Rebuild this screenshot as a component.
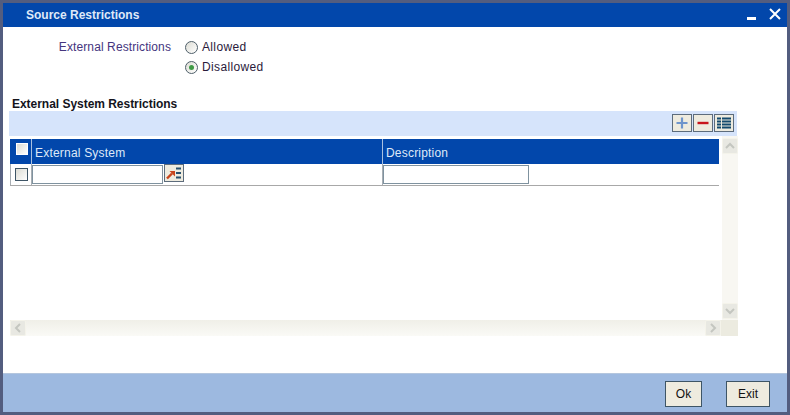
<script>
  let restriction = 'disallowed'
</script>

<div class="window">
  <header class="titlebar">
    <span class="title">Source Restrictions</span>
    <div class="wincontrols">
      <span class="min"></span>
      <svg class="close" width="12" height="12" viewBox="0 0 12 12"><path d="M1 1l10 10M11 1L1 11" stroke="#fff" stroke-width="2" fill="none"/></svg>
    </div>
  </header>

  <main class="content">
    <div class="radios">
      <span class="fieldlabel">External Restrictions</span>
      <div class="options">
        <label class="opt">
          <span class="radio" class:on={restriction === 'allowed'}></span><span class="opttext">Allowed</span>
        </label>
        <label class="opt">
          <span class="radio" class:on={restriction === 'disallowed'}></span><span class="opttext">Disallowed</span>
        </label>
      </div>
    </div>

    <h2 class="section">External System Restrictions</h2>

    <div class="gridwrap">
      <div class="toolbar">
        <button class="tool" aria-label="Add">
          <svg width="14" height="14" viewBox="0 0 14 14"><path d="M7 1.500v11M1.500 7h11" stroke="#6f95cc" stroke-width="2.200"/></svg>
        </button>
        <button class="tool" aria-label="Remove">
          <svg width="14" height="14" viewBox="0 0 14 14"><path d="M1.500 7h11" stroke="#c8141c" stroke-width="2.400"/></svg>
        </button>
        <button class="tool" aria-label="Columns">
          <svg width="14" height="13" viewBox="0 0 14 13"><path d="M0 1.500h14M0 4.500h14M0 7.500h14M0 10.500h14" stroke="#134a6e" stroke-width="2"/><path d="M4.500 0v12" stroke="#eeebdf" stroke-width="1"/></svg>
        </button>
      </div>

      <div class="gridbody">
        <div class="tablepane">
          <div class="thead">
            <div class="cellcheck"><span class="check headcheck"></span></div>
            <div class="col1 th">External System</div>
            <div class="th">Description</div>
          </div>
          <div class="trow">
            <div class="cellcheck"><span class="check"></span></div>
            <div class="col1 td">
              <span class="input wide"></span>
              <button class="lov" aria-label="List of values">
                <svg width="16" height="14" viewBox="0 0 16 14">
                  <path d="M1 12.500L6 7.500" stroke="#c8451c" stroke-width="2.400"/>
                  <path d="M3.500 5h5.500v5.500z" fill="#c8451c"/>
                  <path d="M10 2.500h5M10 7h5M10 11.500h5" stroke="#27506e" stroke-width="2"/>
                </svg>
              </button>
            </div>
            <div class="td"><span class="input desc"></span></div>
          </div>
        </div>
        <div class="vscroll">
          <span class="sbtn"><svg width="10" height="8" viewBox="0 0 10 8"><path d="M1 6l4-4 4 4" stroke="#c4c6c0" stroke-width="2" fill="none"/></svg></span>
          <span class="sbtn"><svg width="10" height="8" viewBox="0 0 10 8"><path d="M1 2l4 4 4-4" stroke="#c4c6c0" stroke-width="2" fill="none"/></svg></span>
        </div>
      </div>

      <div class="hscroll">
        <div class="htrack">
          <span class="sbtn"><svg width="8" height="10" viewBox="0 0 8 10"><path d="M6 1L2 5l4 4" stroke="#c4c6c0" stroke-width="2" fill="none"/></svg></span>
          <span class="sbtn"><svg width="8" height="10" viewBox="0 0 8 10"><path d="M2 1l4 4-4 4" stroke="#c4c6c0" stroke-width="2" fill="none"/></svg></span>
        </div>
        <div class="corner"></div>
      </div>
    </div>
  </main>

  <footer class="footer">
    <button class="btn ok">Ok</button>
    <button class="btn">Exit</button>
  </footer>
</div>

<style>
  :global(body) {
    margin: 0;
    background: #fff;
  }
  .window {
    box-sizing: border-box;
    width: 790px;
    height: 415px;
    border: 3px solid #535d7f;
    display: flex;
    flex-direction: column;
    font-family: "Liberation Sans", Arial, sans-serif;
    font-size: 12px;
    background: #fff;
    overflow: hidden;
  }
  .titlebar {
    height: 24px;
    background: #0247ab;
    display: flex;
    align-items: center;
    justify-content: space-between;
    padding: 0 6px 0 23px;
    flex: none;
  }
  .title {
    color: #dfe9f8;
    font-weight: bold;
    font-size: 12px;
  }
  .wincontrols {
    display: flex;
    align-items: center;
    gap: 13px;
  }
  .min {
    width: 9px;
    height: 3px;
    background: #fff;
    margin-top: 6px;
  }
  .close {
    margin-top: -3px;
  }
  .content {
    flex: 1;
    padding-top: 9px;
    min-height: 0;
  }
  .radios {
    display: flex;
    align-items: flex-start;
  }
  .fieldlabel {
    width: 168px;
    text-align: right;
    color: #45357e;
    line-height: 22px;
    letter-spacing: 0.1px;
    flex: none;
  }
  .options {
    margin-left: 14px;
    display: flex;
    flex-direction: column;
  }
  .opt {
    display: flex;
    align-items: center;
    height: 20px;
    gap: 4px;
    color: #2a1a3a;
  }
  .opttext {
    margin-top: 2px;
    letter-spacing: 0.35px;
  }
  .radio {
    box-sizing: border-box;
    width: 13px;
    height: 13px;
    border-radius: 50%;
    border: 1px solid #4f5f6a;
    background: linear-gradient(135deg, #dcdcd4, #fff);
    display: flex;
    align-items: center;
    justify-content: center;
    margin-top: 2px;
  }
  .radio.on::after {
    content: "";
    width: 5px;
    height: 5px;
    border-radius: 50%;
    background: #3f9a45;
  }
  .section {
    margin: 21px 0 0 9px;
    font-size: 12px;
    font-weight: bold;
    color: #14141c;
    line-height: 14px;
    height: 14px;
    letter-spacing: -0.03px;
  }
  .gridwrap {
    margin-left: 6px;
    width: 729px;
  }
  .toolbar {
    box-sizing: border-box;
    height: 25px;
    margin-right: 1px;
    background: #d6e4fb;
    display: flex;
    justify-content: flex-end;
    align-items: center;
    gap: 1px;
    padding: 0 3px 1px 0;
  }
  .tool {
    box-sizing: border-box;
    width: 20px;
    height: 18px;
    margin: 0;
    padding: 0;
    border: 1px solid #5d6c7c;
    background: #eeebdf;
    display: flex;
    align-items: center;
    justify-content: center;
  }
  .gridbody {
    display: flex;
    height: 184px;
  }
  .tablepane {
    box-sizing: border-box;
    width: 709px;
    margin-left: 1px;
    padding-top: 3px;
    flex: none;
  }
  .thead {
    display: flex;
    height: 25px;
    background: #0247ab;
  }
  .th {
    color: #dfe9f8;
    line-height: 28px;
    padding-left: 3px;
    letter-spacing: 0.2px;
  }
  .cellcheck {
    box-sizing: border-box;
    width: 22px;
    flex: none;
    display: flex;
    justify-content: center;
    align-items: center;
    padding-left: 1px;
    border-left: 1px solid #a9c0e0;
    border-right: 1px solid #a9c0e0;
  }
  .thead .cellcheck {
    border-left: 0;
    padding-left: 2px;
    padding-bottom: 5px;
  }
  .col1 {
    box-sizing: border-box;
    width: 351px;
    flex: none;
    border-right: 1px solid #a9c0e0;
  }
  .trow {
    display: flex;
    height: 22px;
    border-bottom: 1px solid #a8a8a8;
    box-sizing: border-box;
  }
  .trow .cellcheck {
    border-color: #a8aeb4;
  }
  .trow .col1 {
    border-color: #a8aeb4;
  }
  .td {
    display: flex;
    align-items: flex-start;
    padding-top: 1px;
  }
  .check {
    box-sizing: border-box;
    display: block;
    width: 13px;
    height: 13px;
    border: 1px solid #3e5566;
    background: linear-gradient(135deg, #dcdcd4, #fff);
  }
  .headcheck {
    border: 1px solid #fff;
    width: 12px;
    height: 12px;
  }
  .input {
    box-sizing: border-box;
    display: block;
    height: 19px;
    border: 1px solid #7f929f;
    background: #fff;
  }
  .wide {
    width: 131px;
  }
  .desc {
    width: 146px;
  }
  .lov {
    box-sizing: border-box;
    width: 20px;
    height: 18px;
    margin: -1px 0 0 1px;
    padding: 0;
    border: 1px solid #5d6c7c;
    background: #eeebdf;
    display: flex;
    align-items: center;
    justify-content: center;
  }
  .vscroll {
    box-sizing: border-box;
    margin-left: 3px;
    width: 16px;
    padding: 2px 0 1px;
    background: #f8f7f2;
    display: flex;
    flex-direction: column;
    justify-content: space-between;
  }
  .sbtn {
    box-sizing: border-box;
    width: 16px;
    height: 16px;
    border: 1px solid #f4f3ea;
    border-radius: 2px;
    background: #e8e8e2;
    display: flex;
    align-items: center;
    justify-content: center;
    flex: none;
  }
  .hscroll {
    display: flex;
    height: 16px;
  }
  .htrack {
    margin-left: 1px;
    width: 711px;
    background: linear-gradient(#f0efe8, #fafaf6);
    display: flex;
    justify-content: space-between;
  }
  .corner {
    flex: 1;
    background: #ecebe0;
  }
  .footer {
    flex: none;
    box-sizing: border-box;
    height: 39px;
    background: #9db9e0;
    border-top: 1px solid #b4c6de;
    display: flex;
    justify-content: flex-end;
    align-items: center;
    gap: 24px;
    padding: 0 17px 0 0;
  }
  .btn {
    box-sizing: border-box;
    width: 37px;
    height: 26px;
    padding: 0;
    margin: 1px 0 0 0;
    background: #eeebdf;
    border: 1px solid #3e5566;
    font-family: inherit;
    font-size: 12px;
    color: #111;
  }
  .btn:not(.ok) {
    width: 44px;
  }
</style>
